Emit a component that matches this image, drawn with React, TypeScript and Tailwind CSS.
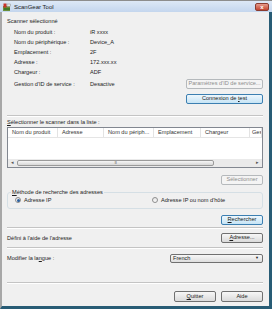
import React from "react";

const font = "font-['Liberation_Sans',Arial,sans-serif]";

type V = "normal" | "disabled" | "default";

function Btn({ children, w, v = "normal", h = "h-[10px]" }: { children: React.ReactNode; w: string; v?: V; h?: string }) {
  const base = `${h} ${w} flex items-center justify-center rounded-[2px] border text-[5.6px] leading-none shrink-0 whitespace-nowrap`;
  const cls =
    v === "disabled"
      ? "border-[#b5b9bc] bg-[#f4f4f4] text-[#8d8d8d]"
      : v === "default"
      ? "border-[#3c7fb1] bg-linear-to-b from-[#eef7fd] to-[#c6e4f5] text-[#1a1a1a]"
      : "border-[#707070] bg-linear-to-b from-[#f7f7f7] to-[#dadada] text-[#1a1a1a]";
  return <div className={`${base} ${cls}`}>{children}</div>;
}

function U({ children }: { children: React.ReactNode }) {
  return <span className="underline underline-offset-[1px] decoration-[0.5px]">{children}</span>;
}

function Sep() {
  return (
    <div className="flex flex-col">
      <div className="h-px bg-[#c4c4c4]" />
      <div className="h-px bg-white" />
    </div>
  );
}

function Radio({ checked, label }: { checked?: boolean; label: string }) {
  return (
    <div className="flex items-center gap-[3px] whitespace-nowrap">
      <div className="w-[6px] h-[6px] rounded-full border border-[#8e8f8f] bg-linear-to-b from-[#e6e6e6] to-[#fafafa] flex items-center justify-center">
        {checked && <div className="w-[3px] h-[3px] rounded-full bg-[#2a5f9e]" />}
      </div>
      <span>{label}</span>
    </div>
  );
}

const infoRows: [string, string][] = [
  ["Nom du produit :", "iR xxxx"],
  ["Nom du périphérique :", "Device_A"],
  ["Emplacement :", "2F"],
  ["Adresse :", "172.xxx.xx"],
  ["Chargeur :", "ADF"],
];

const cols: [string, string][] = [
  ["Nom du produit", "w-[50px] shrink-0 pl-[4px]"],
  ["Adresse", "w-[46px] shrink-0 pl-[4px]"],
  ["Nom du périph...", "w-[50px] shrink-0 pl-[4px]"],
  ["Emplacement", "w-[47px] shrink-0 pl-[4px]"],
  ["Chargeur", "w-[49px] shrink-0 pl-[4px]"],
  ["Ges", "flex-1 min-w-0 pl-[2px]"],
];

export default function App() {
  return (
    <div className={`${font} w-[272px] h-[309px] flex flex-col bg-[#f0f0f0] text-[#1c1c1c] text-[5.6px] overflow-hidden`}>
      {/* Title bar */}
      <div className="h-[12px] shrink-0 flex items-center border-t border-[#8d8d8d] bg-linear-to-b from-[#dde8f6] to-[#c4d6ee] pl-[3px] pr-[3px]">
        <svg width="8" height="8" viewBox="0 0 8 8" className="shrink-0">
          <rect x="0" y="3" width="7" height="5" fill="#6a8f3a" />
          <rect x="0.5" y="0.5" width="3" height="4" fill="#c9332a" />
          <rect x="4" y="1" width="3.5" height="2.5" fill="#e7e7e7" stroke="#777" strokeWidth="0.4" />
          <rect x="1" y="5" width="6" height="2" fill="#3f7a2a" />
        </svg>
        <span className="ml-[3px] text-[6px] text-[#1a1a1a] leading-none">ScanGear Tool</span>
        <div className="ml-auto w-[14px] h-[8px] rounded-[2px] border border-[#8b3b30] bg-linear-to-b from-[#e59a8b] to-[#c2432f] flex items-center justify-center">
          <span className="text-white text-[6px] font-bold leading-none">x</span>
        </div>
      </div>

      {/* Body */}
      <div className="flex-1 min-h-0 flex border-l-2 border-l-[#a7a7a7] border-r-[3px] border-r-[#285c75] border-b-[3px] border-b-[#285c75]">
        <div className="flex-1 min-w-0 flex flex-col pl-[5px] pr-[6px]">
          <div className="h-[4px]" />
          <div className="h-[10px] leading-[10px]">Scanner sélectionné</div>
          <div className="mt-[1px] flex flex-col">
            {infoRows.map(([k, v]) => (
              <div key={k} className="h-[10px] flex items-center pl-[7px]">
                <span className="w-[76px]">{k}</span>
                <span>{v}</span>
              </div>
            ))}
          </div>
          <div className="mt-[2px] flex">
            <div className="h-[10px] flex items-center pl-[7px]">
              <span className="w-[76px]">Gestion d'ID de service :</span>
              <span>Desactive</span>
            </div>
            <div className="ml-auto flex flex-col gap-[5px]">
              <Btn w="w-[77px]" v="disabled">Paramètres d'ID de service...</Btn>
              <Btn w="w-[77px]" v="default">
                <span>Connexion de <U>t</U>est</span>
              </Btn>
            </div>
          </div>

          <div className="mt-[11px]">
            <Sep />
          </div>
          <div className="h-[10px] flex items-center">
            <span><U>S</U>électionner le scanner dans la liste :</span>
          </div>

          {/* List */}
          <div className="h-[41px] border border-[#828790] bg-white flex flex-col min-w-0">
            <div className="h-[10px] flex border-b border-[#e5e5e5] overflow-hidden text-[#333]">
              {cols.map(([c, w]) => (
                <div key={c} className={`${w} flex items-center border-r border-[#e3e3e3] overflow-hidden whitespace-nowrap`}>
                  {c}
                </div>
              ))}
            </div>
            <div className="flex-1" />
            <div className="h-[8px] flex bg-[#eaeaea]">
              <div className="w-[9px] flex items-center justify-center text-[#555] text-[5px]">◂</div>
              <div className="w-[197px] my-[1px] rounded-[2px] border border-[#9a9a9a] bg-linear-to-b from-[#f6f6f6] to-[#d7d7d7] flex items-center justify-center text-[#777] text-[4px] tracking-[-0.5px]">
                III
              </div>
              <div className="flex-1" />
              <div className="w-[9px] flex items-center justify-center text-[#555] text-[5px]">▸</div>
            </div>
          </div>

          <div className="mt-[7px] flex justify-end">
            <Btn w="w-[42px]" v="disabled">Sélectionner</Btn>
          </div>

          {/* Group box */}
          <div className="relative mt-[2px] pt-[5px]">
            <div className="h-[17px] rounded-[3px] border border-[#d5dfe5] flex items-center pl-[7px]">
              <div className="w-[137px]">
                <Radio checked label="Adresse IP" />
              </div>
              <Radio label="Adresse IP ou nom d'hôte" />
            </div>
            <div className="absolute left-[4px] top-0 h-[10px] flex items-center px-[1px] bg-[#f0f0f0]">
              <span><U>M</U>éthode de recherche des adresses</span>
            </div>
          </div>

          <div className="mt-[6px] flex justify-end">
            <Btn w="w-[42px]" v="default">
              <span><U>R</U>echercher</span>
            </Btn>
          </div>

          <div className="mt-[2px]">
            <Sep />
          </div>

          <div className="mt-[4px] h-[10px] flex items-center">
            <span>Défini à l'aide de l'adresse</span>
            <div className="ml-auto">
              <Btn w="w-[42px]">
                <span><U>A</U>dresse...</span>
              </Btn>
            </div>
          </div>

          <div className="mt-[4px]">
            <Sep />
          </div>

          <div className="mt-[4px] h-[10px] flex items-center">
            <span>Modifier la la<U>n</U>gue :</span>
            <div className="ml-auto w-[93px] h-[9px] rounded-[2px] border border-[#707070] bg-linear-to-b from-[#f7f7f7] to-[#dedede] flex items-center pl-[2px] pr-[3px]">
              <span>French</span>
              <span className="ml-auto text-[4px] text-[#222]">▼</span>
            </div>
          </div>

          <div className="mt-[19px]">
            <Sep />
          </div>

          <div className="mt-[7px] flex justify-end gap-[5px]">
            <Btn w="w-[42px]" h="h-[11px]">
              <span><U>Q</U>uitter</span>
            </Btn>
            <Btn w="w-[42px]" h="h-[11px]">Aide</Btn>
          </div>
        </div>
      </div>
    </div>
  );
}
